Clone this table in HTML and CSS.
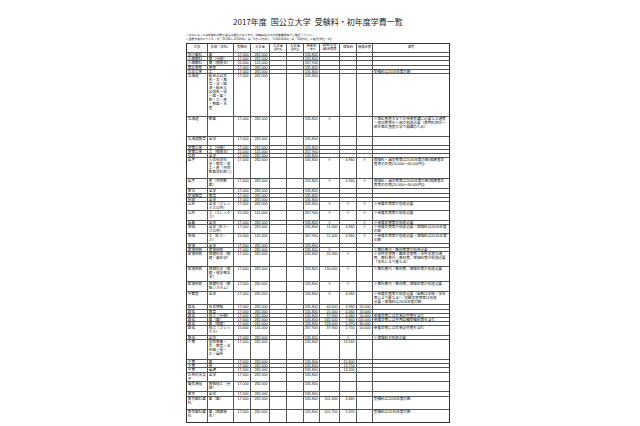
FILE: index.html
```html
<!DOCTYPE html>
<html lang="ja">
<head>
<meta charset="utf-8">
<title>2017年度 国公立大学 受験料・初年度学費一覧</title>
<link rel="stylesheet" href="styles.css">
</head>
<body>
<div class="sheet">
  <h1 class="title">2017年度&ensp;国公立大学&ensp;受験料・初年度学費一覧</h1>
  <div class="notes">
    <div>※大学によっては受験料の額が異なる場合があります（詳細は各大学の募集要項等でご確認ください）</div>
    <div>※金額の表示について：例「10,000〜20,000円」は「1万〜2万円」、「1,000,000円」は「100万円」と表記(単位：円)</div>
  </div>
  <div class="table">
    <div class="row head">
      <div class="c">大学</div>
      <div class="c">学部（学科）</div>
      <div class="c">受験料</div>
      <div class="c">入学金</div>
      <div class="c">入学金<span class="sub">(県内生)</span></div>
      <div class="c">入学金<span class="sub">(県外生)</span></div>
      <div class="c">授業料<span class="sub">(一年分)</span></div>
      <div class="c">設備/実習<br>/諸会費等</div>
      <div class="c">保険料</div>
      <div class="c">後援会費</div>
      <div class="c">備考</div>
    </div>

    <div class="row h41"><div class="c">旭川医科</div><div class="c">医</div><div class="c n">17,000</div><div class="c n">282,000</div><div class="c"></div><div class="c"></div><div class="c n">535,800</div><div class="c"></div><div class="c"></div><div class="c"></div><div class="c"></div></div>
    <div class="row h41"><div class="c">小樽商科</div><div class="c">商（昼間）</div><div class="c n">17,000</div><div class="c n">282,000</div><div class="c"></div><div class="c"></div><div class="c n">535,800</div><div class="c"></div><div class="c"></div><div class="c"></div><div class="c"></div></div>
    <div class="row h41"><div class="c">小樽商科</div><div class="c">商（夜間主）</div><div class="c n">15,000</div><div class="c n">141,000</div><div class="c"></div><div class="c"></div><div class="c n">267,900</div><div class="c"></div><div class="c"></div><div class="c"></div><div class="c"></div></div>
    <div class="row h41"><div class="c">帯広畜産</div><div class="c">畜産</div><div class="c n">17,000</div><div class="c n">282,000</div><div class="c"></div><div class="c"></div><div class="c n">535,800</div><div class="c"></div><div class="c"></div><div class="c"></div><div class="c"></div></div>
    <div class="row h41"><div class="c">北見工業</div><div class="c">工</div><div class="c n">17,000</div><div class="c n">282,000</div><div class="c"></div><div class="c"></div><div class="c n">535,800</div><div class="c"></div><div class="c"></div><div class="c"></div><div class="c">受験料は2016年度の額</div></div>
    <div class="row h434"><div class="c">北海道</div><div class="c">総合入試文<br>系・文・教<br>育・法・経<br>済・総合入<br>試理系・理<br>・医・歯・<br>薬・工・農<br>・獣医・水<br>産</div><div class="c n">17,000</div><div class="c n">282,000</div><div class="c"></div><div class="c"></div><div class="c n">535,800</div><div class="c"></div><div class="c"></div><div class="c"></div><div class="c"></div></div>
    <div class="row h195"><div class="c">北海道</div><div class="c">獣医</div><div class="c n">17,000</div><div class="c n">282,000</div><div class="c"></div><div class="c"></div><div class="c n">535,800</div><div class="c m">※</div><div class="c"></div><div class="c"></div><div class="c">※帯広畜産大学での授業受講に必要な交通費<br>・宿泊費等の一部が別途必要（専門科目の一<br>部を帯広畜産大学で開講のため）</div></div>
    <div class="row h90"><div class="c">北海道教育</div><div class="c">全学</div><div class="c n">17,000</div><div class="c n">282,000</div><div class="c"></div><div class="c"></div><div class="c n">535,800</div><div class="c"></div><div class="c"></div><div class="c"></div><div class="c"></div></div>
    <div class="row h41"><div class="c">室蘭工業</div><div class="c">工（昼間）</div><div class="c n">17,000</div><div class="c n">282,000</div><div class="c"></div><div class="c"></div><div class="c n">535,800</div><div class="c"></div><div class="c"></div><div class="c"></div><div class="c"></div></div>
    <div class="row h41"><div class="c">室蘭工業</div><div class="c">工（夜間主）</div><div class="c n">15,000</div><div class="c n">141,000</div><div class="c"></div><div class="c"></div><div class="c n">267,900</div><div class="c"></div><div class="c"></div><div class="c"></div><div class="c"></div></div>
    <div class="row h41"><div class="c">弘前</div><div class="c">全学</div><div class="c n">17,000</div><div class="c n">282,000</div><div class="c"></div><div class="c"></div><div class="c n">535,800</div><div class="c"></div><div class="c"></div><div class="c"></div><div class="c"></div></div>
    <div class="row h215"><div class="c">岩手</div><div class="c">人文社会科<br>学・教育・理<br>工・農（共同<br>獣医学科除く)</div><div class="c n">17,000</div><div class="c n">282,000</div><div class="c"></div><div class="c"></div><div class="c n">535,800</div><div class="c m">※</div><div class="c n">4,960</div><div class="c m">※</div><div class="c">保険料・諸会費等は2016年度の額(保護者会<br>費等の会費(20,000〜30,000円))</div></div>
    <div class="row h95"><div class="c">岩手</div><div class="c">農（共同獣<br>医）</div><div class="c n">17,000</div><div class="c n">282,000</div><div class="c"></div><div class="c"></div><div class="c n">535,800</div><div class="c m">※</div><div class="c n">5,560</div><div class="c m">※</div><div class="c">保険料・諸会費等は2016年度の額(保護者会<br>費等の会費(20,000〜30,000円))</div></div>
    <div class="row h46"><div class="c">東北</div><div class="c">全学</div><div class="c n">17,000</div><div class="c n">282,000</div><div class="c"></div><div class="c"></div><div class="c n">535,800</div><div class="c"></div><div class="c"></div><div class="c"></div><div class="c"></div></div>
    <div class="row h42"><div class="c">宮城教育</div><div class="c">教育</div><div class="c n">17,000</div><div class="c n">282,000</div><div class="c"></div><div class="c"></div><div class="c n">535,800</div><div class="c"></div><div class="c"></div><div class="c"></div><div class="c"></div></div>
    <div class="row h42"><div class="c">秋田</div><div class="c">全学</div><div class="c n">17,000</div><div class="c n">282,000</div><div class="c"></div><div class="c"></div><div class="c n">535,800</div><div class="c"></div><div class="c"></div><div class="c"></div><div class="c"></div></div>
    <div class="row h87"><div class="c">山形</div><div class="c">全学（フレッ<br>クス以外）</div><div class="c n">17,000</div><div class="c n">282,000</div><div class="c"></div><div class="c"></div><div class="c n">535,800</div><div class="c m">※</div><div class="c m">※</div><div class="c m">※</div><div class="c">※後援会費等が別途必要</div></div>
    <div class="row h100"><div class="c">山形</div><div class="c">工（フレック<br>ス）</div><div class="c n">15,000</div><div class="c n">141,000</div><div class="c"></div><div class="c"></div><div class="c n">267,900</div><div class="c m">※</div><div class="c m">※</div><div class="c m">※</div><div class="c">※後援会費等が別途必要</div></div>
    <div class="row h43"><div class="c">福島</div><div class="c">全学</div><div class="c n">17,000</div><div class="c n">282,000</div><div class="c"></div><div class="c"></div><div class="c n">535,800</div><div class="c m">※</div><div class="c"></div><div class="c m">※</div><div class="c">※後援会費等が別途必要</div></div>
    <div class="row h88"><div class="c">茨城</div><div class="c">全学（Bコー<br>ス以外）</div><div class="c n">17,000</div><div class="c n">282,000</div><div class="c"></div><div class="c"></div><div class="c n">535,800</div><div class="c n">11,000</div><div class="c n">4,960</div><div class="c m">※</div><div class="c">※後援会費等が別途必要・保険料は2016年度<br>の額</div></div>
    <div class="row h100"><div class="c">茨城</div><div class="c">工（Bコー<br>ス）</div><div class="c n">15,000</div><div class="c n">141,000</div><div class="c"></div><div class="c"></div><div class="c n">267,900</div><div class="c n">11,000</div><div class="c n">4,960</div><div class="c m">※</div><div class="c">※後援会費等が別途必要・保険料は2016年度<br>の額</div></div>
    <div class="row h42"><div class="c">筑波</div><div class="c">全学</div><div class="c n">17,000</div><div class="c n">282,000</div><div class="c"></div><div class="c"></div><div class="c n">535,800</div><div class="c"></div><div class="c"></div><div class="c"></div><div class="c"></div></div>
    <div class="row h42"><div class="c">筑波技術</div><div class="c">産業技術</div><div class="c n">17,000</div><div class="c n">282,000</div><div class="c"></div><div class="c"></div><div class="c n">535,800</div><div class="c m">※</div><div class="c"></div><div class="c"></div><div class="c">※教科書代・教材費等が別途必要</div></div>
    <div class="row h148"><div class="c">筑波技術</div><div class="c">保健科学（保<br>健・鍼灸学）</div><div class="c n">17,000</div><div class="c n">282,000</div><div class="c"></div><div class="c"></div><div class="c n">535,800</div><div class="c n">20,340</div><div class="c m">※</div><div class="c"></div><div class="c">※学外実習費・臨床実習費・学外実習交通<br>費、教科書代・教材費、保険料等が別途必要<br>（学年により異なる）</div></div>
    <div class="row h150"><div class="c">筑波技術</div><div class="c">保健科学（保<br>健・理学療法<br>学）</div><div class="c n">17,000</div><div class="c n">282,000</div><div class="c"></div><div class="c"></div><div class="c n">535,800</div><div class="c n">130,000</div><div class="c m">※</div><div class="c"></div><div class="c">※教科書代・教材費、保険料等が別途必要</div></div>
    <div class="row h100"><div class="c">筑波技術</div><div class="c">保健科学（情<br>報システム）</div><div class="c n">17,000</div><div class="c n">282,000</div><div class="c"></div><div class="c"></div><div class="c n">535,800</div><div class="c m">※</div><div class="c m">※</div><div class="c"></div><div class="c">※教科書代・教材費、保険料等が別途必要</div></div>
    <div class="row h135"><div class="c">宇都宮</div><div class="c">全学</div><div class="c n">17,000</div><div class="c n">282,000</div><div class="c"></div><div class="c"></div><div class="c n">535,800</div><div class="c m">※</div><div class="c n">4,960</div><div class="c"></div><div class="c">※後援会費等が別途必要（金額は学部・学年<br>等により異なる）・実験実習費等は別途<br>必要・保険料は2016年度の額</div></div>
    <div class="row h42"><div class="c">群馬</div><div class="c">社会情報</div><div class="c n">17,000</div><div class="c n">282,000</div><div class="c"></div><div class="c"></div><div class="c n">535,800</div><div class="c n">44,000</div><div class="c n">4,960</div><div class="c n">20,000</div><div class="c"></div></div>
    <div class="row h42"><div class="c">群馬</div><div class="c">教育</div><div class="c n">17,000</div><div class="c n">282,000</div><div class="c"></div><div class="c"></div><div class="c n">535,800</div><div class="c n">21,000</div><div class="c n">4,460</div><div class="c n">20,000</div><div class="c"></div></div>
    <div class="row h42"><div class="c">群馬</div><div class="c">理工（昼間）</div><div class="c n">17,000</div><div class="c n">282,000</div><div class="c"></div><div class="c"></div><div class="c n">535,800</div><div class="c n">37,900</div><div class="c n">4,460</div><div class="c n">50,000</div><div class="c">後援会費には卒業記念費を含む</div></div>
    <div class="row h42"><div class="c">群馬</div><div class="c">医（医）</div><div class="c n">17,000</div><div class="c n">282,000</div><div class="c"></div><div class="c"></div><div class="c n">535,800</div><div class="c n">245,500</div><div class="c n">7,660</div><div class="c n">100,000</div><div class="c">後援会費には共用試験受験料等を含む</div></div>
    <div class="row h42"><div class="c">群馬</div><div class="c">医（保健）</div><div class="c n">17,000</div><div class="c n">282,000</div><div class="c"></div><div class="c"></div><div class="c n">535,800</div><div class="c n">118,000</div><div class="c n">5,370</div><div class="c n">80,000</div><div class="c"></div></div>
    <div class="row h96"><div class="c">群馬</div><div class="c">理工（フレッ<br>クス）</div><div class="c n">15,000</div><div class="c n">141,000</div><div class="c"></div><div class="c"></div><div class="c n">267,900</div><div class="c n">37,900</div><div class="c n">2,750</div><div class="c n">50,000</div><div class="c">後援会費には卒業記念費を含む</div></div>
    <div class="row h44"><div class="c">埼玉</div><div class="c">全学</div><div class="c n">17,000</div><div class="c n">282,000</div><div class="c"></div><div class="c"></div><div class="c n">535,800</div><div class="c"></div><div class="c m">※</div><div class="c"></div><div class="c">※保険料が別途必要</div></div>
    <div class="row h195"><div class="c">千葉</div><div class="c">国際教養・<br>文・教育・法<br>政経・理・<br>工・園芸</div><div class="c n">17,000</div><div class="c n">282,000</div><div class="c"></div><div class="c"></div><div class="c n">535,800</div><div class="c"></div><div class="c n">13,160</div><div class="c"></div><div class="c"></div></div>
    <div class="row h43"><div class="c">千葉</div><div class="c">医</div><div class="c n">17,000</div><div class="c n">282,000</div><div class="c"></div><div class="c"></div><div class="c n">535,800</div><div class="c"></div><div class="c n">15,600</div><div class="c"></div><div class="c"></div></div>
    <div class="row h43"><div class="c">千葉</div><div class="c">薬</div><div class="c n">17,000</div><div class="c n">282,000</div><div class="c"></div><div class="c"></div><div class="c n">535,800</div><div class="c"></div><div class="c n">13,750</div><div class="c"></div><div class="c"></div></div>
    <div class="row h43"><div class="c">千葉</div><div class="c">看護</div><div class="c n">17,000</div><div class="c n">282,000</div><div class="c"></div><div class="c"></div><div class="c n">535,800</div><div class="c"></div><div class="c n">13,200</div><div class="c"></div><div class="c"></div></div>
    <div class="row h96"><div class="c">お茶の水女<br>子</div><div class="c">全学</div><div class="c n">17,000</div><div class="c n">282,000</div><div class="c"></div><div class="c"></div><div class="c n">535,800</div><div class="c"></div><div class="c"></div><div class="c"></div><div class="c"></div></div>
    <div class="row h100"><div class="c">電気通信</div><div class="c">情報理工（昼<br>間）</div><div class="c n">17,000</div><div class="c n">282,000</div><div class="c"></div><div class="c"></div><div class="c n">535,800</div><div class="c"></div><div class="c"></div><div class="c"></div><div class="c"></div></div>
    <div class="row h50"><div class="c">東京</div><div class="c">全学</div><div class="c n">17,000</div><div class="c n">282,000</div><div class="c"></div><div class="c"></div><div class="c n">535,800</div><div class="c"></div><div class="c"></div><div class="c"></div><div class="c"></div></div>
    <div class="row h125"><div class="c">東京医科歯<br>科</div><div class="c">医（医）</div><div class="c n">17,000</div><div class="c n">282,000</div><div class="c"></div><div class="c"></div><div class="c n">535,800</div><div class="c n">101,400</div><div class="c n">4,660</div><div class="c"></div><div class="c">受験料は2016年度の額</div></div>
    <div class="row h125"><div class="c">東京医科歯<br>科</div><div class="c">歯（保健衛<br>生）</div><div class="c n">17,000</div><div class="c n">282,000</div><div class="c"></div><div class="c"></div><div class="c n">535,800</div><div class="c n">101,750</div><div class="c n">5,370</div><div class="c"></div><div class="c">受験料は2016年度の額</div></div>
  </div>
</div>
</body>
</html>
```
FILE: styles.css
```css
html, body {
  margin: 0;
  padding: 0;
  background: #ffffff;
}

body {
  font-family: "Liberation Sans", "Noto Sans CJK JP", sans-serif;
  color: #111111;
}

.sheet {
  width: 264px;
  margin-left: 186px;
  padding-top: 16px;
}

.title {
  margin: 0;
  text-align: center;
  font-family: "Noto Sans CJK JP", sans-serif;
  font-size: 8px;
  line-height: 11px;
  font-weight: normal;
  color: #1a1a1a;
}

.notes {
  margin-top: 6px;
  font-size: 2.8px;
  line-height: 4px;
  white-space: nowrap;
  color: #222222;
}

.table {
  margin-top: 1.7px;
  border: 1px solid #333333;
}

.row {
  display: grid;
  grid-template-columns: 21px 26px 17px 19px 17px 17px 16px 20px 17px 16px 1fr;
  border-bottom: 1px solid #555555;
  box-sizing: border-box;
}

.row:last-child {
  border-bottom: 0;
}

.c {
  border-right: 1px solid #555555;
  padding: 0 0.8px;
  font-size: 3.6px;
  line-height: 4.05px;
  white-space: nowrap;
  overflow: visible;
  min-width: 0;
}

.c:last-child {
  border-right: 0;
}

.n {
  text-align: right;
  padding-right: 1.6px;
}

.m {
  text-align: center;
}

.head {
  height: 9.6px;
}

.head .c {
  display: flex;
  flex-direction: column;
  align-items: center;
  justify-content: center;
  text-align: center;
  font-size: 3.3px;
  line-height: 3.8px;
}

.head .sub {
  font-size: 2.5px;
  line-height: 3px;
}

.h41 { height: 4.1px; }
.h42 { height: 4.2px; }
.h43 { height: 4.3px; }
.h44 { height: 4.4px; }
.h46 { height: 4.6px; }
.h50 { height: 5px; }
.h87 { height: 8.7px; }
.h88 { height: 8.8px; }
.h90 { height: 9px; }
.h95 { height: 9.5px; }
.h96 { height: 9.6px; }
.h100 { height: 10px; }
.h125 { height: 12.5px; }
.h135 { height: 13.5px; }
.h148 { height: 14.8px; }
.h150 { height: 15px; }
.h195 { height: 19.5px; }
.h215 { height: 21.5px; }
.h434 { height: 43.4px; }
```
